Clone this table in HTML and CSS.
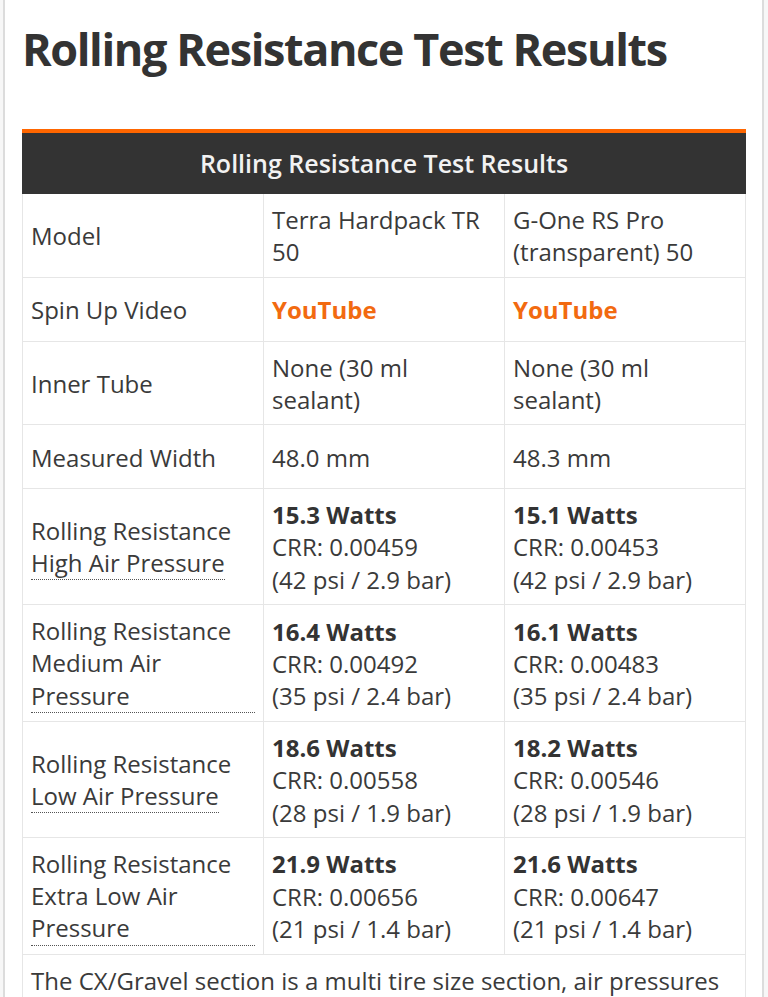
FILE: index.html
```html
<!DOCTYPE html>
<html>
<head>
<meta charset="utf-8">
<link rel="stylesheet" href="styles.css">
</head>
<body>
<div class="page">
  <h1 class="title">Rolling Resistance Test Results</h1>
  <table class="results">
    <thead>
      <tr><th colspan="3">Rolling Resistance Test Results</th></tr>
    </thead>
    <tbody>
      <tr class="r2">
        <td>Model</td>
        <td>Terra Hardpack TR 50</td>
        <td>G-One RS Pro (transparent) 50</td>
      </tr>
      <tr class="r1">
        <td>Spin Up Video</td>
        <td><a class="link" href="#">YouTube</a></td>
        <td><a class="link" href="#">YouTube</a></td>
      </tr>
      <tr class="r2">
        <td>Inner Tube</td>
        <td>None (30 ml sealant)</td>
        <td>None (30 ml sealant)</td>
      </tr>
      <tr class="r1">
        <td>Measured Width</td>
        <td>48.0 mm</td>
        <td>48.3 mm</td>
      </tr>
      <tr>
        <td>Rolling Resistance <span class="tip">High Air Pressure</span></td>
        <td><b>15.3 Watts</b><br>CRR: 0.00459<br>(42 psi / 2.9 bar)</td>
        <td><b>15.1 Watts</b><br>CRR: 0.00453<br>(42 psi / 2.9 bar)</td>
      </tr>
      <tr>
        <td>Rolling Resistance <span class="tip">Medium Air Pressure</span></td>
        <td><b>16.4 Watts</b><br>CRR: 0.00492<br>(35 psi / 2.4 bar)</td>
        <td><b>16.1 Watts</b><br>CRR: 0.00483<br>(35 psi / 2.4 bar)</td>
      </tr>
      <tr>
        <td>Rolling Resistance <span class="tip">Low Air Pressure</span></td>
        <td><b>18.6 Watts</b><br>CRR: 0.00558<br>(28 psi / 1.9 bar)</td>
        <td><b>18.2 Watts</b><br>CRR: 0.00546<br>(28 psi / 1.9 bar)</td>
      </tr>
      <tr>
        <td>Rolling Resistance <span class="tip">Extra Low Air Pressure</span></td>
        <td><b>21.9 Watts</b><br>CRR: 0.00656<br>(21 psi / 1.4 bar)</td>
        <td><b>21.6 Watts</b><br>CRR: 0.00647<br>(21 psi / 1.4 bar)</td>
      </tr>
      <tr>
        <td colspan="3">The CX/Gravel section is a multi tire size section, air pressures are adjusted to the tire width.</td>
      </tr>
    </tbody>
  </table>
</div>
</body>
</html>
```

FILE: styles.css
```css
html, body {
  margin: 0;
  padding: 0;
  background: #f7f7f7;
}
.page {
  margin: 0 4px 0 3px;
  background: #fff;
  border-left: 2px solid #dcdcdc;
  border-right: 2px solid #dcdcdc;
  padding: 1px 16px 40px 17px;
  min-height: 1200px;
  font-family: "Open Sans", "DejaVu Sans", sans-serif;
  color: #333;
}
.title {
  margin: 18px 0 50px 0;
  font-size: 45px;
  line-height: 60px;
  font-weight: 700;
  color: #333;
  letter-spacing: -1.4px;
}
.results {
  width: 100%;
  border-collapse: collapse;
  border-top: 4px solid #f60;
  font-size: 24px;
  line-height: 32.3px;
}
.results th {
  background: #333;
  color: #f2f2f2;
  height: 60px;
  padding: 0;
  font-size: 25px;
  font-weight: 600;
  text-align: center;
  border: 1px solid #333;
}
.results td {
  border: 1px solid #e6e6e6;
  padding: 10px 8px 8px 8px;
  vertical-align: middle;
  width: 33.33%;
  color: #3a3a3a;
}
.results tr.r1 td { height: 45px; }
.results b { font-weight: 700; color: #333; }
.link {
  color: #f26a10;
  font-weight: 700;
  text-decoration: none;
}
.tip {
  display: inline-block;
  border-bottom: 1px dotted #555;
}
```
